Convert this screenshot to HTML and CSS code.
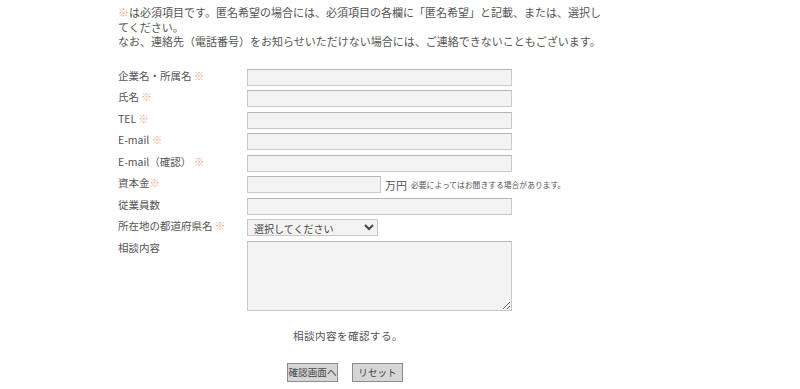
FILE: index.html
```html
<!DOCTYPE html>
<html lang="ja">
<head>
<meta charset="utf-8">
<title>お問い合わせ</title>
<link rel="stylesheet" href="styles.css">
</head>
<body>
<div class="wrap">
  <p class="notice"><span class="req">※</span>は必須項目です。匿名希望の場合には、必須項目の各欄に「匿名希望」と記載、または、選択してください。<br>なお、連絡先（電話番号）をお知らせいただけない場合には、ご連絡できないこともございます。</p>

  <form class="form">
    <div class="row">
      <label class="label">企業名・所属名 <span class="req">※</span></label>
      <input class="field" type="text">
    </div>
    <div class="row">
      <label class="label">氏名 <span class="req">※</span></label>
      <input class="field" type="text">
    </div>
    <div class="row">
      <label class="label">TEL <span class="req">※</span></label>
      <input class="field" type="text">
    </div>
    <div class="row">
      <label class="label">E-mail <span class="req">※</span></label>
      <input class="field" type="text">
    </div>
    <div class="row">
      <label class="label">E-mail（確認） <span class="req">※</span></label>
      <input class="field" type="text">
    </div>
    <div class="row">
      <label class="label">資本金<span class="req">※</span></label>
      <div class="inline">
        <input class="field short" type="text">
        <span class="unit">万円</span>
        <span class="hint">必要によってはお聞きする場合があります。</span>
      </div>
    </div>
    <div class="row">
      <label class="label">従業員数</label>
      <input class="field" type="text">
    </div>
    <div class="row">
      <label class="label">所在地の都道府県名 <span class="req">※</span></label>
      <select class="select"><option>選択してください</option></select>
    </div>
    <div class="row">
      <label class="label">相談内容</label>
      <textarea class="area"></textarea>
    </div>

    <p class="confirm">相談内容を確認する。</p>

    <div class="buttons">
      <button type="button" class="btn">確認画面へ</button>
      <button type="reset" class="btn">リセット</button>
    </div>
  </form>
</div>
</body>
</html>
```

FILE: styles.css
```css
* { box-sizing: border-box; }

body {
  margin: 0;
  background: #ffffff;
  color: #555555;
  font-family: "Noto Sans CJK JP", "Noto Sans", sans-serif;
  font-size: 11px;
}

.wrap {
  padding: 5px 0 0 118px;
}

.notice {
  margin: 0;
  width: 486px;
  font-size: 11px;
  line-height: 14.6px;
}

.req {
  color: #eea583;
}

.form {
  margin-top: 20px;
  display: flex;
  flex-direction: column;
  gap: 4.5px;
}

.row {
  display: flex;
  align-items: flex-start;
}

.label {
  width: 129px;
  flex: none;
  line-height: 14px;
  font-size: 10.5px;
}

.field {
  width: 265px;
  height: 17px;
  margin: 0;
  padding: 0 3px;
  border: 1px solid #c9c9c9;
  border-top-color: #b5b5b5;
  background: #f3f3f3;
  font: inherit;
}

.field.short {
  width: 134px;
}

.inline {
  display: flex;
  align-items: center;
  height: 17px;
}

.unit {
  margin-left: 4px;
  font-size: 11px;
}

.hint {
  margin-left: 4px;
  font-size: 7.8px;
}

.select {
  width: 131px;
  height: 17px;
  margin: 0;
  padding: 0 2px;
  border: 1px solid #c9c9c9;
  background: #f3f3f3;
  color: #444;
  font-family: inherit;
  font-size: 10px;
}

.area {
  width: 265px;
  height: 70px;
  margin: 0;
  border: 1px solid #c9c9c9;
  border-top-color: #b5b5b5;
  background: #f3f3f3;
  resize: both;
}

.confirm {
  margin: 14px 0 0 175px;
  font-size: 10.6px;
  line-height: 14px;
  letter-spacing: 0.4px;
}

.buttons {
  margin: 15px 0 0 169px;
  display: flex;
  gap: 14px;
}

.btn {
  width: 51px;
  height: 19px;
  margin: 0;
  padding: 0;
  border: 1px solid #8c8c8c;
  background: #d6d6d6;
  color: #444;
  font-family: inherit;
  font-size: 9.6px;
  line-height: 17px;
}
```
